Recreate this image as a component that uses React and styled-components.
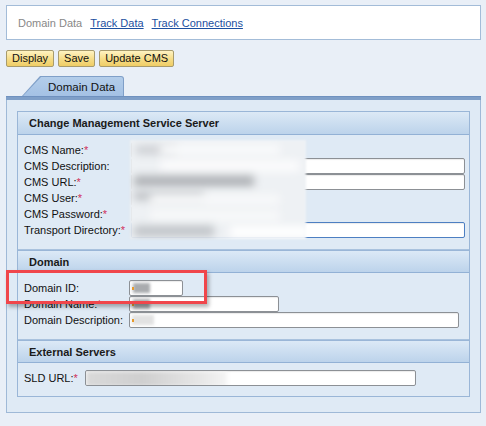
import React from "react";
import styled, { createGlobalStyle } from "styled-components";

const Global = createGlobalStyle`
  html, body { margin: 0; padding: 0; }
  body {
    background: #e9eff7;
    font-family: "Liberation Sans", Arial, sans-serif;
    font-size: 11px;
    color: #111;
  }
`;

const Page = styled.div`
  width: 486px;
  height: 426px;
  box-sizing: border-box;
  padding: 5px 5px 0 6px;
  overflow: hidden;
`;

const TopBar = styled.div`
  height: 35px;
  box-sizing: border-box;
  background: #fff;
  border: 1px solid #a3bcd8;
  display: flex;
  align-items: center;
  padding-left: 11px;
  gap: 8px;
  font-size: 11px;
`;

const Crumb = styled.span`
  color: #888;
`;

const Link = styled.a`
  color: #1b4fa0;
  text-decoration: underline;
  cursor: pointer;
`;

const Toolbar = styled.div`
  margin-top: 10px;
  display: flex;
  gap: 4px;
`;

const Button = styled.button`
  height: 17px;
  box-sizing: border-box;
  padding: 0 5px;
  font-family: inherit;
  font-size: 11px;
  color: #111;
  background: linear-gradient(#fff3c2, #f6dc86 55%, #efcd66);
  border: 1px solid #a89b6c;
  border-radius: 2px;
  line-height: 15px;
`;

const TabStrip = styled.div`
  margin-top: 9px;
  height: 20px;
  padding-left: 16px;
  display: flex;
`;

const TabOuter = styled.div`
  position: relative;
  width: 102px;
  height: 20px;
  background: #7f9fc8;
  clip-path: polygon(18px 0, 100% 0, 100% 100%, 0 100%);
  border-top-right-radius: 3px;
`;

const TabInner = styled.div`
  position: absolute;
  inset: 1px 1px 0 1px;
  background: linear-gradient(#b3cdea, #a4c1e4);
  clip-path: polygon(18px 0, 100% 0, 100% 100%, 0 100%);
  border-top-right-radius: 2px;
  display: flex;
  align-items: center;
  padding-left: 25px;
  font-size: 11.5px;
  color: #111;
`;

const TabBar = styled.div`
  height: 4px;
  background: #7f9fc8;
  border-top: 1px solid #6f91bf;
  box-sizing: border-box;
`;

const Panel = styled.div`
  height: 313px;
  box-sizing: border-box;
  background: #dfeaf5;
  border: 1px solid #9fb9d7;
  border-top: none;
  padding: 11px 10px 13px 10px;
`;

const Group = styled.div`
  border: 1px solid #9ab6d7;
  background: #dfeaf5;
`;

const Header = styled.div`
  height: 23px;
  box-sizing: border-box;
  background: linear-gradient(#dce9f6, #bcd3eb);
  border-top: ${(p) => (p.$first ? "none" : "1px solid #9ab6d7")};
  border-bottom: 1px solid #92b1d5;
  display: flex;
  align-items: center;
  padding-left: 11px;
  font-weight: bold;
  font-size: 11px;
  color: #1a1a1a;
`;

const Body = styled.div`
  position: relative;
  display: grid;
  grid-template-columns: max-content 1fr;
  grid-auto-rows: 16px;
  column-gap: ${(p) => p.$gap || "6px"};
  align-items: center;
  padding: ${(p) => p.$pad || "7px 6px 11px 6px"};
  border-bottom: ${(p) => (p.$last ? "none" : "1px solid #a9c2de")};
`;

const Label = styled.span`
  white-space: nowrap;
  font-size: 11px;
  color: #111;
  line-height: 16px;
`;

const Req = styled.span`
  color: #d0305a;
`;

const Field = styled.div`
  position: relative;
  width: ${(p) => p.$w}px;
  height: 16px;
  box-sizing: border-box;
  background: #fff;
  border: 1px solid ${(p) => (p.$focus ? "#4d7fc2" : "#8c9095")};
  border-radius: 2px;
  box-shadow: inset 0 1px 1px rgba(0, 0, 0, 0.08);
  overflow: hidden;
`;

const Smudge = styled.span`
  position: absolute;
  left: ${(p) => p.$l}px;
  top: 2px;
  width: ${(p) => p.$w}px;
  height: 10px;
  background: ${(p) => p.$c};
  filter: blur(1.5px);
`;

const Tick = styled.span`
  position: absolute;
  left: 2px;
  top: 6px;
  width: 2px;
  height: 3px;
  background: #e79a2b;
  filter: blur(0.4px);
`;

const BlurBlock = styled.div`
  position: absolute;
  left: 112px;
  top: 5px;
  width: 176px;
  height: 99px;
  background: #eef1f4;
  filter: blur(1.2px);
  overflow: hidden;
`;

const BlurBar = styled.span`
  position: absolute;
  left: ${(p) => p.$l}px;
  top: ${(p) => p.$t}px;
  width: ${(p) => p.$w}px;
  height: ${(p) => p.$h || 8}px;
  background: ${(p) => p.$c};
  filter: blur(4px);
`;

const Annotation = styled.div`
  position: absolute;
  left: -12px;
  top: -3px;
  width: 201px;
  height: 34px;
  box-sizing: border-box;
  border: 3px solid #f0464b;
  box-shadow: 2px 3px 4px rgba(0, 0, 0, 0.3);
  pointer-events: none;
`;

const SldBlur = styled.span`
  position: absolute;
  left: 0;
  top: 0;
  width: 141px;
  height: 16px;
  background: linear-gradient(90deg, #d9d9d9, #cfcfcf 40%, #e6e6e6 80%, #f4f4f4);
  filter: blur(2px);
`;

export default function App() {
  return (
    <>
      <Global />
      <Page>
        <TopBar>
          <Crumb>Domain Data</Crumb>
          <Link>Track Data</Link>
          <Link>Track Connections</Link>
        </TopBar>
        <Toolbar>
          <Button>Display</Button>
          <Button>Save</Button>
          <Button>Update CMS</Button>
        </Toolbar>
        <TabStrip>
          <TabOuter>
            <TabInner>Domain Data</TabInner>
          </TabOuter>
        </TabStrip>
        <TabBar />
        <Panel>
          <Group>
            <Header $first>Change Management Service Server</Header>
            <Body>
              <Label>CMS Name:<Req>*</Req></Label>
              <Field $w={170} />
              <Label>CMS Description:</Label>
              <Field $w={334} />
              <Label>CMS URL:<Req>*</Req></Label>
              <Field $w={334} />
              <Label>CMS User:<Req>*</Req></Label>
              <Field $w={170} />
              <Label>CMS Password:<Req>*</Req></Label>
              <Field $w={170} />
              <Label>Transport Directory:<Req>*</Req></Label>
              <Field $w={334} $focus />
              <BlurBlock>
                <BlurBar $l={6} $t={6} $w={40} $c="#c9ccd0" />
                <BlurBar $l={30} $t={4} $w={120} $h={12} $c="#f8f9fa" />
                <BlurBar $l={30} $t={20} $w={140} $h={12} $c="#fbfbfc" />
                <BlurBar $l={4} $t={36} $w={120} $h={10} $c="#a9acb0" />
                <BlurBar $l={4} $t={52} $w={70} $h={8} $c="#b9bcc0" />
                <BlurBar $l={20} $t={54} $w={130} $h={12} $c="#f7f8f9" />
                <BlurBar $l={20} $t={70} $w={130} $h={12} $c="#f7f8f9" />
                <BlurBar $l={4} $t={86} $w={80} $h={10} $c="#bcc0c4" />
                <BlurBar $l={100} $t={86} $w={80} $h={12} $c="#ffffff" />
              </BlurBlock>
            </Body>
            <Header>Domain</Header>
            <Body>
              <Label>Domain ID:</Label>
              <Field $w={54}>
                <Smudge $l={3} $w={17} $c="#a9abae" />
                <Tick />
              </Field>
              <Label>Domain Name:<Req>*</Req></Label>
              <Field $w={150}>
                <Smudge $l={3} $w={17} $c="#a9abae" />
                <Tick />
              </Field>
              <Label>Domain Description:</Label>
              <Field $w={330}>
                <Smudge $l={2} $w={22} $c="#e2e2e2" />
                <Tick />
              </Field>
              <Annotation />
            </Body>
            <Header>External Servers</Header>
            <Body $last $gap="7px" $pad="7px 6px 10px 6px">
              <Label>SLD URL:<Req>*</Req></Label>
              <Field $w={331}>
                <SldBlur />
              </Field>
            </Body>
          </Group>
        </Panel>
      </Page>
    </>
  );
}
